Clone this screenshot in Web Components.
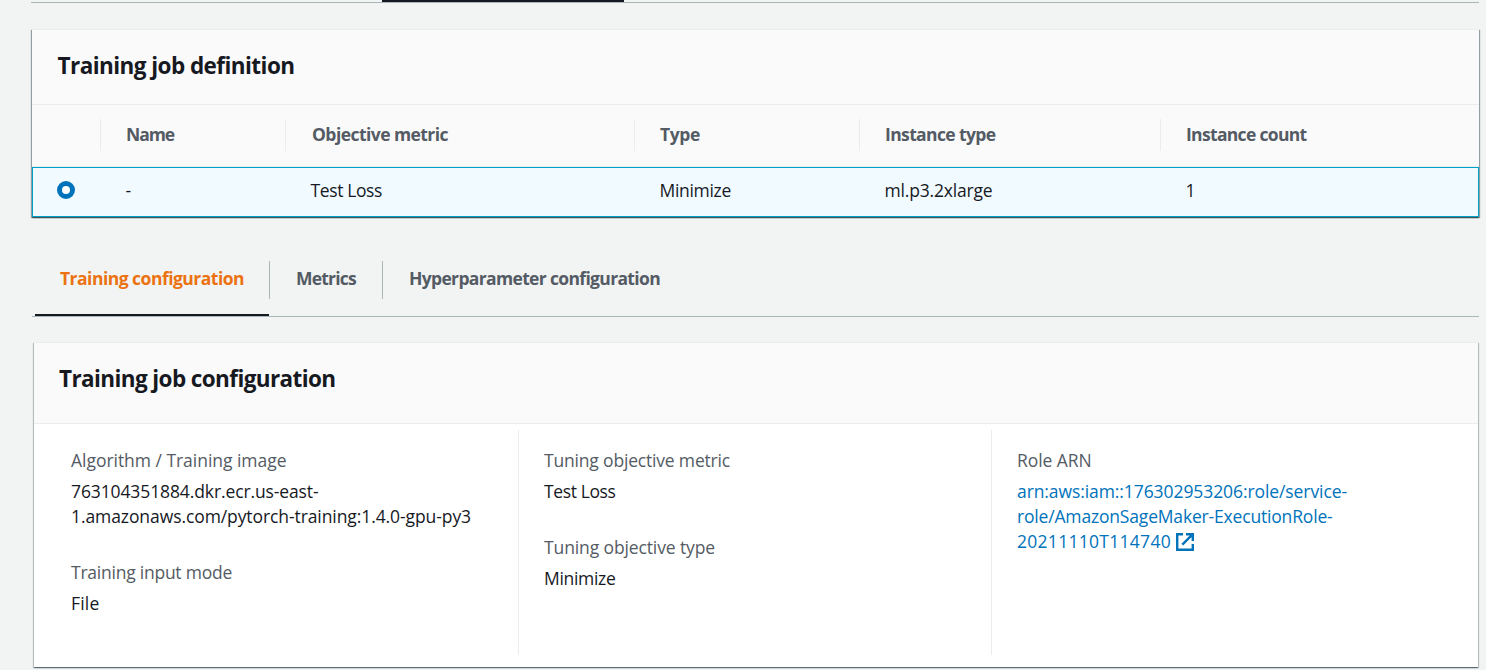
<!DOCTYPE html>
<html lang="en">
<head>
<meta charset="utf-8">
<title>Training job definition</title>
<style>
html,body{margin:0;height:100%;overflow:hidden;background:#f2f4f3}
body{font-family:"Open Sans","Noto Sans",sans-serif;font-size:17.5px;line-height:25px;color:#16191f}
</style>
</head>
<body>
<job-page></job-page>
<script>
const define = (name, html, setup) => customElements.define(name, class extends HTMLElement {
  connectedCallback() {
    if (this.shadowRoot) return;
    const t = document.createElement('template');
    t.innerHTML = html;
    this.attachShadow({mode: 'open'}).append(t.content.cloneNode(true));
    if (setup) setup(this, this.shadowRoot);
  }
});

// A single line of text tracked so that it spans the given width.
define('fit-text', `<style>
:host{display:block;white-space:nowrap}
span{display:inline-block;white-space:nowrap}
</style><span></span>`, (el, root) => {
  const s = root.querySelector('span');
  s.textContent = el.getAttribute('text');
  const w = parseFloat(el.getAttribute('w'));
  if (w) s.style.letterSpacing = ((w - s.getBoundingClientRect().width) / s.textContent.length).toFixed(3) + 'px';
});

define('ui-card', `<style>
:host{display:block;box-sizing:border-box;background:#fff;border-top:1px solid #eaeded;
box-shadow:0 1px 1px 0 rgba(0,28,36,.4),1px 1px 1px 0 rgba(0,28,36,var(--side,.2)),-1px 1px 1px 0 rgba(0,28,36,var(--side,.2))}
header{box-sizing:border-box;height:var(--head,75px);padding:var(--pad,23px 25.5px);background:#fafafa;border-bottom:1px solid #eaeded;font-size:22.5px;line-height:25px;font-weight:700}
</style><header><slot name="title"></slot></header><slot></slot>`);

define('ui-radio', `<style>
:host{display:block;box-sizing:border-box;width:18px;height:18px;border:5.4px solid #0073bb;border-radius:50%;background:#fff}
</style>`);

define('job-table', `<style>
:host{display:block}
.r{display:grid;grid-template-columns:68px 185px 349px 225px 301px 1fr;align-items:center}
.h{height:62px;box-sizing:border-box;background:#fafafa;border-bottom:1px solid #eaeded;font-weight:700;color:#545b64}
.h>*{height:32px;line-height:31px;border-left:1px solid #eaeded;padding-left:25px;margin-top:-1px}
.h>:nth-child(3){padding-left:26px}
.h>:first-child{border:0}
.b{height:50px;box-sizing:border-box;background:#f1faff;border:1px solid #00a1c9;grid-template-columns:67px 185px 349px 225px 301px 1fr}
.b>*{padding-left:25.5px}
.b>:first-child{padding-left:24px;margin-top:-4px}
.b>:nth-child(n+2){margin-top:-3px}
</style>
<div class="r h"><div></div>
<fit-text text="Name" w="48"></fit-text><fit-text text="Objective metric" w="136"></fit-text><fit-text text="Type" w="40"></fit-text><fit-text text="Instance type" w="110.5"></fit-text><fit-text text="Instance count" w="120.5"></fit-text></div>
<div class="r b"><div><ui-radio></ui-radio></div>
<fit-text text="-"></fit-text><fit-text text="Test Loss" w="71.5"></fit-text><fit-text text="Minimize" w="71.5"></fit-text><fit-text text="ml.p3.2xlarge" w="108"></fit-text><fit-text text="1"></fit-text></div>`);

define('job-tabs', `<style>
:host{display:flex;box-sizing:border-box;height:56px;border-bottom:1px solid #aab7b8;font-weight:700;color:#545b64}
div{box-sizing:border-box;height:38px;line-height:35px;padding-left:26px;border-right:1px solid #aab7b8}
div:last-child{border:0}
.on{width:234px;height:55px;margin-left:3px;padding-left:25px;border:0;color:#ec7211;border-bottom:2px solid #16191f}
.m{border-left:1px solid #aab7b8;width:114px}
</style><div class="on"><fit-text text="Training configuration" w="184"></fit-text></div><div class="m"><fit-text text="Metrics" w="60"></fit-text></div><div><fit-text text="Hyperparameter configuration" w="251"></fit-text></div>`);

define('ui-field', `<style>
:host{display:block;margin-bottom:31px}
.l{color:#545b64;margin-bottom:6px}
</style><div class="l"><slot name="label"></slot></div><slot></slot>`);

define('external-icon', `<style>:host{display:block;width:18px;height:18px;color:#0073bb}svg{display:block}</style>
<svg width="18" height="18" viewBox="0 0 18 18" fill="none" stroke="currentColor" stroke-width="2.4"><path d="M7 1.2H1.2v15.6h15.6V11M10 1.2h6.8V8M16.3 1.7 6.3 11.7"/></svg>`);

define('job-details', `<style>
:host{display:grid;grid-template-columns:484px 473px 1fr;padding-top:6px;height:225px}
section{box-sizing:border-box;padding:18px 0 0 37px}
section+section{border-left:1px solid #eaeded;padding-left:25px}
.a{color:#0073bb;display:flex;gap:5px;align-items:center}
.k{color:#0073bb}
</style>
<section>
<ui-field><fit-text slot="label" text="Algorithm / Training image" w="215.5"></fit-text><fit-text text="763104351884.dkr.ecr.us-east-" w="247.5"></fit-text><fit-text text="1.amazonaws.com/pytorch-training:1.4.0-gpu-py3" w="400"></fit-text></ui-field>
<ui-field><fit-text slot="label" text="Training input mode" w="161"></fit-text><fit-text text="File" w="28.5"></fit-text></ui-field>
</section>
<section>
<ui-field><fit-text slot="label" text="Tuning objective metric" w="186"></fit-text><fit-text text="Test Loss" w="71.5"></fit-text></ui-field>
<ui-field><fit-text slot="label" text="Tuning objective type" w="171"></fit-text><fit-text text="Minimize" w="71.5"></fit-text></ui-field>
</section>
<section>
<ui-field><fit-text slot="label" text="Role ARN" w="74.5"></fit-text><fit-text class="k" text="arn:aws:iam::176302953206:role/service-" w="330"></fit-text><fit-text class="k" text="role/AmazonSageMaker-ExecutionRole-" w="315.5"></fit-text><div class="a"><fit-text text="20211110T114740" w="154"></fit-text><external-icon></external-icon></div></ui-field>
</section>`);

define('job-page', `<style>
:host{display:block;padding-right:7px}
.top{height:2px;margin-left:31px;border-bottom:1px solid #aab7b8}
.top i{display:block;width:242px;height:2px;margin-left:351px;background:#16191f}
.c1{margin:26px 0 0 32px;--side:.35}
job-tabs{margin:44px 0 0 32px}
.c2{margin:25px 1px 0 34px;height:325px;--head:81px;--pad:23px 25px}
</style>
<div class="top"><i></i></div>
<ui-card class="c1"><fit-text slot="title" text="Training job definition" w="237"></fit-text><job-table></job-table></ui-card>
<job-tabs></job-tabs>
<ui-card class="c2"><fit-text slot="title" text="Training job configuration" w="276.5"></fit-text><job-details></job-details></ui-card>`);
</script>
</body>
</html>
